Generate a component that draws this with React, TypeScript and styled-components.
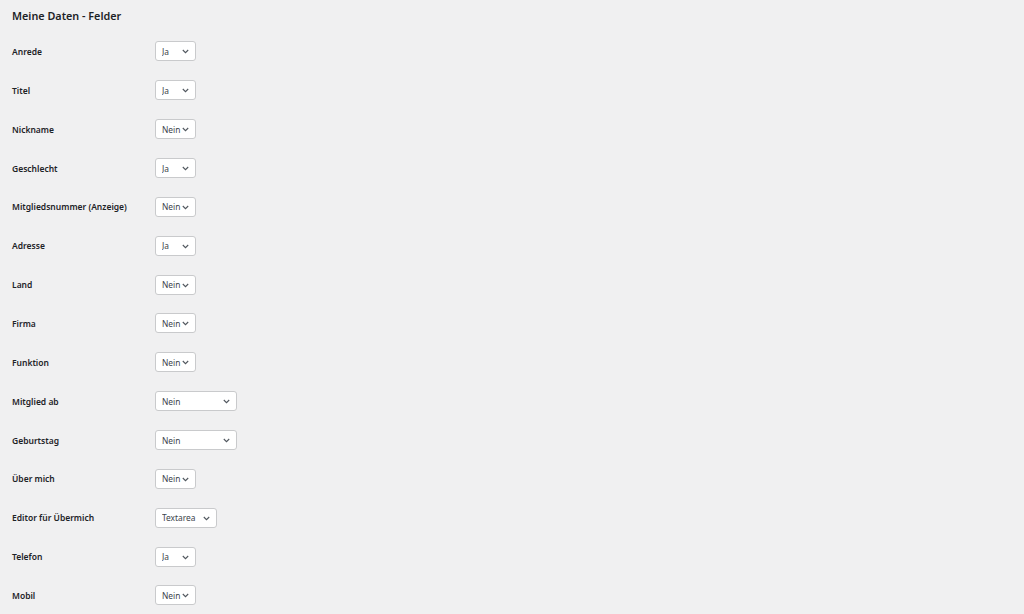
import React from 'react';
import styled, { createGlobalStyle } from 'styled-components';

const GlobalStyle = createGlobalStyle`
  html, body {
    margin: 0;
    padding: 0;
    background: #f0f0f1;
  }
  body {
    font-family: 'Noto Sans', 'Open Sans', sans-serif;
    color: #1d2327;
  }
`;

const Page = styled.div`
  padding: 0 12px;
  height: 614px;
  overflow: hidden;
`;

const Title = styled.h2`
  margin: 0;
  height: 32px;
  line-height: 32px;
  font-size: 10.8px;
  font-weight: 600;
  color: #1d2327;
`;

const Table = styled.div`
  display: grid;
  grid-template-columns: 143px 1fr;
  grid-auto-rows: 38.86px;
`;

const Label = styled.div`
  display: flex;
  align-items: center;
  font-size: 8.5px;
  font-weight: 600;
  color: #1d2327;
`;

const Cell = styled.div`
  display: flex;
  align-items: center;
`;

const SelectWrap = styled.div<{ $width: number }>`
  position: relative;
  width: ${p => p.$width}px;
  height: 20px;
`;

const Select = styled.select`
  display: block;
  appearance: none;
  -webkit-appearance: none;
  box-sizing: border-box;
  width: 100%;
  height: 100%;
  margin: 0;
  padding: 0 12px 0 6px;
  border: 1px solid #c9cacc;
  border-radius: 3px;
  background: #fff;
  font-family: 'Noto Sans', 'Open Sans', sans-serif;
  font-size: 8.4px;
  color: #3c434a;
  outline: none;
`;

const Chevron = styled.svg`
  position: absolute;
  right: 7px;
  top: 8px;
  width: 7px;
  height: 5px;
  pointer-events: none;
`;

type Field = { label: string; value: string; options: string[]; width: number };

const yesNo = ['Ja', 'Nein'];

const fields: Field[] = [
  { label: 'Anrede', value: 'Ja', options: yesNo, width: 41 },
  { label: 'Titel', value: 'Ja', options: yesNo, width: 41 },
  { label: 'Nickname', value: 'Nein', options: yesNo, width: 41 },
  { label: 'Geschlecht', value: 'Ja', options: yesNo, width: 41 },
  { label: 'Mitgliedsnummer (Anzeige)', value: 'Nein', options: yesNo, width: 41 },
  { label: 'Adresse', value: 'Ja', options: yesNo, width: 41 },
  { label: 'Land', value: 'Nein', options: yesNo, width: 41 },
  { label: 'Firma', value: 'Nein', options: yesNo, width: 41 },
  { label: 'Funktion', value: 'Nein', options: yesNo, width: 41 },
  { label: 'Mitglied ab', value: 'Nein', options: ['Nein', 'Jahr', 'Datum'], width: 82 },
  { label: 'Geburtstag', value: 'Nein', options: ['Nein', 'Tag und Monat', 'Datum'], width: 82 },
  { label: 'Über mich', value: 'Nein', options: yesNo, width: 41 },
  { label: 'Editor für Übermich', value: 'Textarea', options: ['Textarea', 'Editor'], width: 62 },
  { label: 'Telefon', value: 'Ja', options: yesNo, width: 41 },
  { label: 'Mobil', value: 'Nein', options: yesNo, width: 41 },
];

function FieldSelect({ field }: { field: Field }) {
  return (
    <SelectWrap $width={field.width}>
      <Select defaultValue={field.value}>
        {field.options.map(o => (
          <option key={o} value={o}>{o}</option>
        ))}
      </Select>
      <Chevron viewBox="0 0 7 5">
        <path d="M0.8 1 L3.5 3.7 L6.2 1" fill="none" stroke="#50575e" strokeWidth="1.1" />
      </Chevron>
    </SelectWrap>
  );
}

export default function App() {
  return (
    <>
      <GlobalStyle />
      <Page>
        <Title>Meine Daten - Felder</Title>
        <Table>
          {fields.map(f => (
            <React.Fragment key={f.label}>
              <Label>{f.label}</Label>
              <Cell>
                <FieldSelect field={f} />
              </Cell>
            </React.Fragment>
          ))}
        </Table>
      </Page>
    </>
  );
}
